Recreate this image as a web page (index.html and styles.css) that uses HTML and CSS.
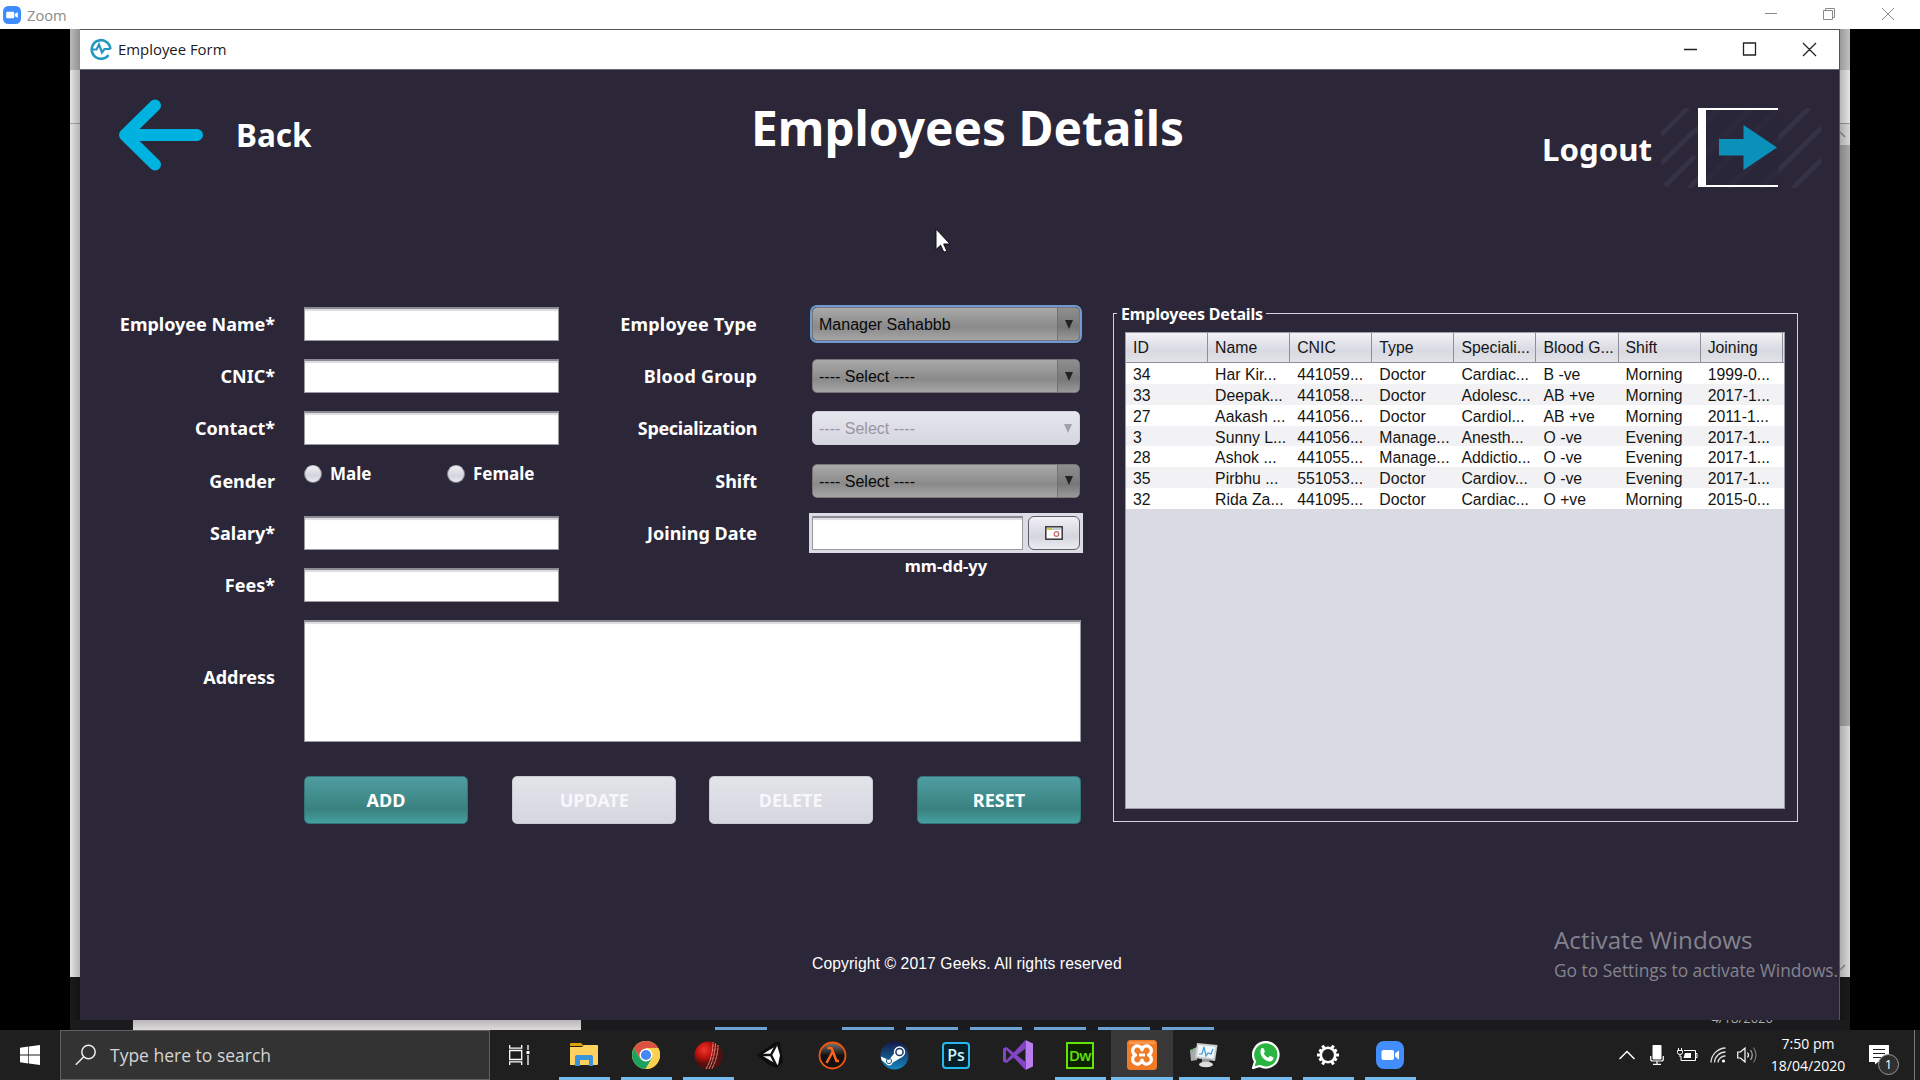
FILE: index.html
```html
<!DOCTYPE html>
<html lang="en">
<head>
<meta charset="utf-8">
<title>Employee Form</title>
<link rel="stylesheet" href="styles.css">
</head>
<body>
<header class="zoom-bar">
  <svg class="zoom-logo" viewBox="0 0 28 28"><rect width="28" height="28" rx="8" fill="#3f8cff"/><rect x="5" y="9" width="12.500" height="10" rx="2" fill="#fff"/><path d="M18.500 12.500 23 9.500v9l-4.500-3z" fill="#fff"/></svg>
  <span class="zoom-name">Zoom</span>
  <svg class="zoom-controls" width="130" height="29" viewBox="0 0 130 29" fill="none" stroke="#8a8a8a"><path d="M0 13.500h12M58.500 10.500h9v9h-9zM60.500 10.500v-2h9v9h-2M117 8l12 12M129 8l-12 12"/></svg>
</header>

<main class="stage">
  <div class="screen">
    <div class="desk-edge edge-left"></div>
    <section class="window">
      <div class="title-bar">
        <svg class="app-logo" viewBox="0 0 22 22" fill="none" stroke="#2596c0" stroke-width="2.600"><path d="M20.300 11A9.300 9.300 0 1 0 18.500 17"/><path d="M1.500 11.500h5l2.500-5 3 8 2.500-3.500h6" stroke-width="2.200"/></svg>
        <span>Employee Form</span>
        <svg class="win-controls" width="134" height="20" viewBox="0 0 134 20" fill="none" stroke="#222" stroke-width="1.300"><path d="M1 10.500h13M60.500 4h12v12h-12zM120 4l13 13M133 4l-13 13"/></svg>
      </div>
      <div class="page">
        <div class="page-head">
          <a class="back">
            <svg width="85" height="72" viewBox="0 0 85 72" fill="none" stroke="#00b2e0" stroke-width="12" stroke-linecap="round" stroke-linejoin="round"><path d="M37 6.500 7 36l30 29.500M7 36h72"/></svg>
            <span>Back</span>
          </a>
          <h1>Employees Details</h1>
          <a class="logout">
            <span>Logout</span>
            <svg width="170" height="80" viewBox="0 0 170 80">
              <g stroke="#343244" stroke-width="5"><path d="M0 27 27 0M0 56 34 22M4 78 34 48M34 24 58 0M28 80 40 68M40 50 90 0M40 78 118 0M68 80 148 0M100 80 160 20M132 80 160 52"/></g>
              <rect x="45" y="1" width="73" height="78" fill="#2b2739" opacity=".75"/>
              <path d="M37 0h80v2H45v75h72v2H37z" fill="#fff"/>
              <path d="M58 31h24.500V17L116 39.500 82.500 62V47.500H58z" fill="#0a90b9"/>
            </svg>
          </a>
        </div>

        <div class="content">
          <form class="form">
            <div class="columns">
              <div class="fields fields-left">
                <label>Employee Name*</label><div class="text-input"></div>
                <label>CNIC*</label><div class="text-input"></div>
                <label>Contact*</label><div class="text-input"></div>
                <label>Gender</label>
                <div class="radios"><span class="radio"><i></i>Male</span><span class="radio"><i></i>Female</span></div>
                <label>Salary*</label><div class="text-input"></div>
                <label>Fees*</label><div class="text-input"></div>
              </div>
              <div class="fields fields-right">
                <label class="loose">Employee Type</label><div class="combo focused"><span>Manager Sahabbb</span><b></b></div>
                <label class="loose">Blood Group</label><div class="combo"><span>---- Select ----</span><b></b></div>
                <label class="tight">Specialization</label><div class="combo disabled"><span>---- Select ----</span><b></b></div>
                <label>Shift</label><div class="combo"><span>---- Select ----</span><b></b></div>
                <label>Joining Date</label>
                <div class="date-box"><div class="date-input"></div><div class="date-button"><svg width="18" height="14" viewBox="0 0 18 14"><rect x=".8" y=".8" width="16.400" height="12.400" fill="#fff" stroke="#39333e" stroke-width="1.500"/><path d="M2 3h5" stroke="#cfc94a" stroke-width="2"/><path d="M7 3h9" stroke="#b9bccb" stroke-width="1.500"/><circle cx="11.500" cy="8" r="2.300" fill="none" stroke="#c26a72" stroke-width="1.300"/></svg></div></div>
                <div class="date-hint">mm-dd-yy</div>
              </div>
            </div>
            <div class="address"><label>Address</label><div class="text-area"></div></div>
            <div class="actions">
              <div class="btn">ADD</div>
              <div class="btn off">UPDATE</div>
              <div class="btn off">DELETE</div>
              <div class="btn">RESET</div>
            </div>
          </form>

          <div class="panel">
            <div class="legend"><span>Employees Details</span></div>
            <div class="table">
              <div class="row head"><span>ID</span><span>Name</span><span>CNIC</span><span>Type</span><span>Speciali...</span><span>Blood G...</span><span>Shift</span><span>Joining</span></div>
              <div class="row"><span>34</span><span>Har Kir...</span><span>441059...</span><span>Doctor</span><span>Cardiac...</span><span>B -ve</span><span>Morning</span><span>1999-0...</span></div>
              <div class="row"><span>33</span><span>Deepak...</span><span>441058...</span><span>Doctor</span><span>Adolesc...</span><span>AB +ve</span><span>Morning</span><span>2017-1...</span></div>
              <div class="row"><span>27</span><span>Aakash ...</span><span>441056...</span><span>Doctor</span><span>Cardiol...</span><span>AB +ve</span><span>Morning</span><span>2011-1...</span></div>
              <div class="row"><span>3</span><span>Sunny L...</span><span>441056...</span><span>Manage...</span><span>Anesth...</span><span>O -ve</span><span>Evening</span><span>2017-1...</span></div>
              <div class="row"><span>28</span><span>Ashok ...</span><span>441055...</span><span>Manage...</span><span>Addictio...</span><span>O -ve</span><span>Evening</span><span>2017-1...</span></div>
              <div class="row"><span>35</span><span>Pirbhu ...</span><span>551053...</span><span>Doctor</span><span>Cardiov...</span><span>O -ve</span><span>Evening</span><span>2017-1...</span></div>
              <div class="row"><span>32</span><span>Rida Za...</span><span>441095...</span><span>Doctor</span><span>Cardiac...</span><span>O +ve</span><span>Morning</span><span>2015-0...</span></div>
            </div>
          </div>
        </div>
        <footer class="copyright">Copyright © 2017 Geeks. All rights reserved</footer>
      </div>
    </section>
    <div class="desk-edge edge-right"><svg class="edge-up" width="10" height="10" viewBox="0 0 10 10" fill="none" stroke="#777" stroke-width="1.500"><path d="M0 2l5 5"/></svg><svg class="edge-down" width="10" height="10" viewBox="0 0 10 10" fill="none" stroke="#777" stroke-width="1.500"><path d="M0 7l5-5"/></svg></div>
    <div class="inner-taskbar"><div class="inner-search"></div><i></i><i class="far"></i><i></i><i class="wide"></i><i></i><i></i><i></i><span>4/18/2020</span></div>
  </div>
  <svg class="cursor" width="18" height="26" viewBox="0 0 18 26"><path d="M1 1v20.500l4.600-4.300 3.200 7 3-1.300-3.100-6.900h6.300z" fill="#fff" stroke="#111" stroke-width="1"/></svg>
  <div class="activate"><p class="activate-title">Activate Windows</p><p class="activate-text">Go to Settings to activate Windows.</p></div>
</main>

<nav class="taskbar">
  <div class="start"><svg width="20" height="20" viewBox="0 0 20 20" fill="#fff"><path d="M0 2.800 8.300 1.600v8H0zM9 1.500 20 0v9.600H9zM0 10.400h8.300v8L0 17.200zM9 10.400h11V20L9 18.500z"/></svg></div>
  <div class="search"><svg width="22" height="22" viewBox="0 0 22 22" fill="none" stroke="#eee" stroke-width="1.500"><circle cx="13.500" cy="8" r="6.700"/><path d="M8.800 12.800.8 20.800"/></svg><span>Type here to search</span></div>
  <div class="app view"><svg width="21" height="20" viewBox="0 0 21 20" fill="none" stroke="#fff" stroke-width="1.300"><path d="M.7 5.500h12v9H.7zM.7 0v3.200h12V0M.7 20v-3.200h12V20M19 0v5M19 10v10"/><path d="M17.500 6h3v3h-3z" fill="#fff" stroke="none"/></svg></div>
  <div class="app on"><svg width="28" height="24" viewBox="0 0 28 24"><path d="M0 1q0-1 1-1h10l3 3H0z" fill="#e0a106"/><path d="M0 4h12l2-2h13q1 0 1 1v18q0 1-1 1H0z" fill="#ffd25e"/><path d="M5 23V14q0-2 2-2h14q2 0 2 2v9h-4v-6h-9v6z" fill="#3a93dd"/></svg></div>
  <div class="app on"><svg width="28" height="28" viewBox="0 0 28 28"><circle cx="14" cy="14" r="14" fill="#fcd04f"/><path d="M14 14 8.200 17.600 1.900 7A14 14 0 0 1 26.100 7H14z" fill="#dd5044"/><path d="M1.900 7A14 14 0 0 0 13.500 28l6.600-10.700H14L8 17.400z" fill="#1ba261"/><path d="M20 17.300 13.500 28A14 14 0 0 0 26.100 7H14z" fill="#fcd04f"/><circle cx="14" cy="14" r="6.500" fill="#fff"/><circle cx="14" cy="14" r="5.100" fill="#4688f1"/></svg></div>
  <div class="app on"><svg width="29" height="29" viewBox="0 0 29 29"><defs><radialGradient id="ball" cx=".35" cy=".3"><stop offset="0" stop-color="#f0362a"/><stop offset=".6" stop-color="#b8110c"/><stop offset="1" stop-color="#54100c"/></radialGradient></defs><circle cx="14.500" cy="14.500" r="14" fill="url(#ball)"/><path d="M12 28Q19 16 19 1M15 28Q21 16 21.500 2M18 27.500Q24 16 24 4" fill="none" stroke="#e3a89f" stroke-width="1" stroke-dasharray="4 .5" opacity=".85"/></svg></div>
  <div class="app"><svg width="30" height="28" viewBox="0 0 30 28"><path d="M2 14 20 1h5l3 20-6 6-8-3z" fill="#0d0d0d"/><path d="M6 14 22 4.500 25 14l-2 10z" fill="#fff"/><path d="M5 14h11M16 14l5-9.500M16 14l5 10" stroke="#111" stroke-width="2.400"/></svg></div>
  <div class="app"><svg width="29" height="29" viewBox="0 0 29 29"><defs><linearGradient id="orb" x2="0" y2="1"><stop offset="0" stop-color="#777"/><stop offset=".5" stop-color="#111"/></linearGradient></defs><circle cx="14.500" cy="14.500" r="13" fill="url(#orb)" stroke="#f2560f" stroke-width="1.800"/><path d="M9.500 7h3q1 0 1.400 1l4.600 12h2.500M14.500 11 8.500 22" fill="none" stroke="#ff6419" stroke-width="2.500"/></svg></div>
  <div class="app"><svg width="29" height="29" viewBox="0 0 29 29"><defs><linearGradient id="steam" x2="0" y2="1"><stop offset="0" stop-color="#14194a"/><stop offset="1" stop-color="#1586bd"/></linearGradient></defs><circle cx="14.500" cy="14.500" r="14" fill="url(#steam)"/><path d="M.8 15.500 9 19l7-9 6 6-9 5.500q-2 4-5.500 2.500L1.500 19z" fill="#fff"/><circle cx="19.500" cy="11" r="5.700" fill="#fff"/><circle cx="19.500" cy="11" r="3.600" fill="none" stroke="#1c335f" stroke-width="1.500"/><circle cx="9" cy="20" r="2.600" fill="none" stroke="#1c5c8e" stroke-width="1"/></svg></div>
  <div class="app"><div class="ps">Ps</div></div>
  <div class="app"><svg width="30" height="30" viewBox="0 0 30 30"><path d="M22.500 0 30 3.500v23L22.500 30z" fill="#b97df0"/><path d="M0 8.500 3.500 7 22.500 22v8L3 9.500v11L22.500 0v8.500L3.500 23 0 21.500z" fill="#8445c7"/></svg></div>
  <div class="app on"><div class="dw">Dw</div></div>
  <div class="app on active"><svg width="30" height="30" viewBox="0 0 30 30"><rect width="30" height="30" rx="3.500" fill="#f07a26"/><path d="M2 1.500h26v2.500H2z" fill="#ffad6e" opacity=".6"/><path d="M15 10A4.700 4.700 0 1 0 8.500 15 4.700 4.700 0 1 0 15 20 4.700 4.700 0 1 0 21.500 15 4.700 4.700 0 1 0 15 10zM12 15h6" fill="none" stroke="#fff" stroke-width="3.200" stroke-linejoin="round"/></svg></div>
  <div class="app on"><svg width="28" height="26" viewBox="0 0 28 26"><path d="M0 8l7-3v13l-6 1z" fill="#a8aba9"/><path d="M1 8h2" stroke="#35b949" stroke-width="2"/><path d="M7 1 27.500 3 25 19 5 16z" fill="#c9ccce"/><path d="M8.500 3 25.500 4.700 23.500 16.500 7 14.300z" fill="#eef5fb"/><path d="M9 12h3l2-7 2 9 2-3 3 1 2-5" fill="none" stroke="#3f98cf" stroke-width="1.200"/><path d="M12 17h8l-1 4H12z" fill="#999"/><ellipse cx="16" cy="22.500" rx="7" ry="2.800" fill="#ddd"/></svg></div>
  <div class="app on"><svg width="28" height="28" viewBox="0 0 28 28"><path d="M1 27 3 20.500A12.700 12.700 0 1 1 7.800 25z" fill="#2ab540" stroke="#fff" stroke-width="2.200" stroke-linejoin="round"/><path d="M9 8q1-1.500 2.500-.8L13 10.500 11.700 12.500q1.500 3 4.500 4.200l1.800-2 3.500 1.700q.3 3-2.700 4-3 .7-6.800-2.500Q7 13.500 9 8z" fill="#fff"/></svg></div>
  <div class="app on"><svg width="24" height="24" viewBox="0 0 24 24" fill="none" stroke="#fff"><circle cx="12" cy="12" r="7.200" stroke-width="2.600"/><path d="M19.500 12h3.500M1 12h3.500M15.800 5.500l1.700-3M8.200 5.500l-1.700-3M15.800 18.500l1.700 3M8.200 18.500l-1.700 3M18.300 8.300l2.500-1.400M18.300 15.700l2.500 1.400M5.700 8.300 3.200 6.900M5.700 15.700l-2.500 1.400" stroke-width="3"/></svg></div>
  <div class="app on"><svg width="28" height="28" viewBox="0 0 28 28"><rect width="28" height="28" rx="8" fill="#438eff"/><rect x="5.500" y="9" width="12.500" height="10" rx="2" fill="#fff"/><path d="M19 12.500 23 9.500v9l-4-3z" fill="#fff"/></svg></div>
  <div class="tray">
    <svg width="16" height="10" viewBox="0 0 16 10" fill="none" stroke="#fff" stroke-width="1.500"><path d="M.5 9 8 1.500 15.500 9"/></svg>
    <svg width="14" height="20" viewBox="0 0 14 20"><rect x="2.500" width="9" height="14.500" rx="1" fill="#fff"/><path d="M.7 11v3q0 2 2 2h8.600q2 0 2-2v-3M7 16v3M3 19.300h8" fill="none" stroke="#fff" stroke-width="1.200"/></svg>
    <svg width="21" height="14" viewBox="0 0 21 14" fill="none" stroke="#fff"><path d="M7 2.500h11.500v10H4V8M18.500 5.500h1.500v4h-1.500M1.500 0v2.500M4.500 0v2.500M.5 2.500h5v2q0 2-2.500 2t-2.500-2zM3 6.500V9"/><path d="M8 5h6v5H6.500z" fill="#fff" stroke="none"/></svg>
    <svg width="16" height="16" viewBox="0 0 16 16" fill="none" stroke="#ddd" stroke-width="1.300"><path d="M1 15.500A15 15 0 0 1 15.500 1M4.500 15.500A11 11 0 0 1 15.500 5M8 15.500A7 7 0 0 1 15.500 9"/><circle cx="13.500" cy="14" r="1.600" fill="#fff" stroke="none"/></svg>
    <svg width="21" height="18" viewBox="0 0 21 18" fill="none" stroke="#fff" stroke-width="1.200"><path d="M.7 6v6h2.800l4.500 4V2L3.500 6zM10.500 6.500q2 2.500 0 5"/><path d="M13.500 4q3.500 5 0 10" stroke="#aaa"/><path d="M16.500 1.500q5 7.500 0 15" stroke="#777"/></svg>
    <div class="clock"><span>7:50 pm</span><span>18/04/2020</span></div>
    <div class="notice"><svg width="21" height="20" viewBox="0 0 21 20"><path d="M0 0h20v17H9l-3 2.500V17H0z" fill="#fff"/><path d="M4 4.500h12M4 8.500h12M4 12.500h8" stroke="#222" stroke-width="1.200"/></svg><span>1</span></div>
  </div>
</nav>
</body>
</html>
```
FILE: styles.css
```css
* { box-sizing: border-box; }
body {
  margin: 0;
  width: 1920px;
  height: 1080px;
  overflow: hidden;
  display: flex;
  flex-direction: column;
  background: #000;
  font-family: "Open Sans", sans-serif;
}
svg { display: block; flex: none; }
h1, p { margin: 0; }

/* Outer title bar */
.zoom-bar { height: 29px; flex: none; background: #fff; display: flex; align-items: center; padding: 0 25px 0 3px; }
.zoom-logo { width: 18px; height: 18px; }
.zoom-name { margin-left: 6px; color: #8c8c8c; font-size: 14.700px; }
.zoom-controls { margin-left: auto; }

/* Shared screen */
.stage { position: relative; height: 1001px; flex: none; display: flex; justify-content: center; }
.screen { width: 1780px; display: grid; grid-template-columns: 10px 1760px 10px; grid-template-rows: 991px 10px; background: #1b1b1d; }
.desk-edge { position: relative; }
.edge-left { background: linear-gradient(to right, transparent, rgba(0, 0, 0, .22)), linear-gradient(#b9b9b9 0 41px, #e6e4e5 41px 94px, #aaa 94px 95px, #e6e4e5 95px 948px, #1b1a19 948px); }
.edge-right { background: linear-gradient(to left, transparent, rgba(0, 0, 0, .2)), linear-gradient(#c0c0c0 0 41px, #e6e4e5 41px 94px, #999 94px 95px, #d9d7d8 95px 116px, #a9a7a8 116px 697px, #dad7d9 697px 948px, #1b1a19 948px); }
.edge-up { position: absolute; left: 0; top: 101px; }
.edge-down { position: absolute; left: 0; top: 934px; }

.window { display: flex; flex-direction: column; background: #2b2739; border: 1px solid #55545c; border-width: 1px 1px 0 0; }
.title-bar { height: 40px; flex: none; background: #fff; border-bottom: 1px solid #6a6872; display: flex; align-items: center; padding: 0 22px 2px 10px; font-size: 14.900px; color: #1b1b1b; }
.app-logo { width: 22px; height: 22px; margin-right: 6px; }
.win-controls { margin-left: auto; }

.page { flex: 1; display: flex; flex-direction: column; color: #fff; font-family: "Noto Sans", sans-serif; font-weight: 700; }
.page-head { height: 237px; flex: none; display: grid; grid-template-columns: 560px 638px 561px; }
.back { display: flex; align-items: flex-start; padding: 29px 0 0 38px; }
.back span { font-size: 31.500px; line-height: 44px; margin: 14px 0 0 33px; }
.page h1 { font-size: 47.800px; line-height: 64px; margin: 26px -10px 0; text-align: center; padding-left: 17px; white-space: nowrap; }
.logout { display: flex; align-items: flex-start; justify-content: flex-end; padding: 38px 8px 0 0; }
.logout span { font-size: 31.200px; line-height: 44px; margin: 19px 9px 0 0; }

.content { display: flex; height: 517px; flex: none; }
.form { width: 1001px; font-size: 18px; }
.columns { display: flex; padding-left: 21px; }
.fields { display: grid; grid-auto-rows: 34px; row-gap: 18.200px; }
.fields label { text-align: right; line-height: 35px; white-space: nowrap; }
.fields .loose { letter-spacing: .2px; }
.fields .tight { letter-spacing: -.35px; }
.fields-left { grid-template-columns: 174px 255px; column-gap: 29px; }
.fields-right { grid-template-columns: 198px 268px; column-gap: 55px; }
.text-input, .text-area, .date-input { background: #fff; border: 1px solid #9b9aa3; border-top: 2px solid #8c8b94; box-shadow: inset 0 2px 1px #dddde1; }
.radios { display: flex; height: 20px; font-size: 17px; }
.radio { display: flex; align-items: center; gap: 8px; width: 143px; flex: none; line-height: 20px; }
.radio i { width: 18px; height: 18px; border-radius: 50%; background: linear-gradient(#efeff3, #d4d4dd 60%, #e8e8ee); border: 1px solid #8b8993; border-top-color: #c5c4cc; }
.combo { display: flex; justify-content: space-between; border: 1px solid #77767a; border-radius: 5px; background: linear-gradient(#a9a9a9, #8a8a8a 60%, #a6a6a6); color: #080808; font: 16px/33px "Liberation Sans", sans-serif; padding-left: 6px; overflow: hidden; }
.combo b { width: 22px; border-left: 1px solid #727272; background: linear-gradient(#8f8f8f, #777 60%, #999); display: flex; align-items: center; justify-content: center; }
.combo b::before { content: ""; border: 4.500px solid transparent; border-top: 9px solid #222; border-bottom: 0; }
.combo.focused { outline: 2px solid #6f9cd0; outline-offset: 0; }
.combo.disabled { background: linear-gradient(#e6e6ee, #d6d6e0); border-color: #d0d0da; color: #9797a0; }
.combo.disabled b { background: none; border: 0; }
.combo.disabled b::before { border-top-color: #9fa0aa; }
.date-box { display: flex; gap: 5px; padding: 3px; margin: -3px -3px; background: #dcdce4; }
.date-input { width: 211px; }
.date-button { width: 52px; border: 1px solid #5d5c68; border-radius: 6px; background: linear-gradient(#f0f0f5, #d5d5df 60%, #ececf2); display: flex; align-items: center; justify-content: center; }
.date-hint { grid-column: 2; text-align: center; font-size: 16.500px; line-height: 24px; margin-top: -14px; }
.address { display: flex; gap: 29px; margin: 18px 0 0 21px; }
.address label { width: 174px; text-align: right; line-height: 115px; }
.text-area { width: 777px; height: 122px; }
.actions { display: flex; width: 777px; margin: 34px 0 0 224px; font-size: 18px; justify-content: space-between; }
.btn { width: 164px; height: 48px; text-align: center; border-radius: 5px; background: linear-gradient(#4f9da1, #39817f 70%, #44a09f); border: 1px solid #347578; line-height: 47px; }
.btn:nth-child(2) { margin-right: -12px; }
.btn.off { background: linear-gradient(#e3e3ea, #d6d6df); border-color: #c9c9d2; color: #f7f7fc; }

.panel { width: 685px; height: 509px; margin: 6px 0 0 32px; border: 1.500px solid #d2d2d8; padding: 0 12px 0 11px; }
.legend { height: 18px; font-size: 16px; line-height: 20px; margin-left: -8px; }
.legend span { position: relative; top: -10px; display: inline-block; background: #2b2739; padding: 0 3px 0 4px; letter-spacing: -.18px; }
.table { height: 477px; background: #dadae3; border: 1px solid #9c9ba5; font: 15.800px/20.800px "Liberation Sans", sans-serif; color: #151515; overflow: hidden; }
.row { display: grid; grid-template-columns: repeat(8, 82.100px); height: 20.860px; background: #fff; white-space: nowrap; }
.row:nth-child(odd) { background: #f2f2f4; }
.row span { padding-left: 7px; line-height: 24px; }
.row.head { height: 30px; background: linear-gradient(#f2f2f6, #d9d9e2 60%, #e2e2e8); border-bottom: 1.500px solid #8f9099; }
.row.head span { line-height: 30px; border-right: 1px solid #8f8f99; }
.copyright { font: 15.700px/20px "Liberation Sans", sans-serif; margin: 130px 0 0 732px; letter-spacing: .1px; }

/* Strip of the shared desktop under the window */
.inner-taskbar { grid-column: 1 / -1; display: flex; align-items: flex-end; padding-left: 63px; gap: 12px; overflow: hidden; }
.inner-search { width: 448px; height: 10px; background: linear-gradient(#b8b6b7, #dcdadb); margin-right: 122px; }
.inner-taskbar i { width: 52px; height: 3px; background: #6ba4d4; }
.inner-taskbar .far { margin-left: 63px; }
.inner-taskbar span { margin: -9px 77px 0 auto; font-size: 13px; line-height: 14px; color: #aaa; align-self: flex-start; }

.cursor { position: absolute; left: 935px; top: 199px; }
.activate { position: absolute; left: 1554px; top: 893px; color: #85838d; white-space: nowrap; }
.activate-title { font-size: 24.200px; line-height: 36px; }
.activate-text { font-size: 17.350px; line-height: 24px; }

/* Taskbar */
.taskbar { height: 50px; flex: none; background: #1f1f1f; display: flex; color: #fff; }
.start { width: 60px; display: flex; align-items: center; justify-content: center; }
.search { width: 430px; height: 50px; border: 1px solid #606060; background: #333; display: flex; align-items: center; gap: 13px; padding-left: 14px; color: #d5d5d5; font-size: 17.500px; }
.app { width: 62px; display: flex; align-items: center; justify-content: center; }
.view { width: 63px; padding-right: 4px; }
.app.on { background: linear-gradient(#76b9ed, #76b9ed) center bottom / 51px 3px no-repeat; }
.app.active { background: linear-gradient(#76b9ed, #76b9ed) center bottom / 62px 3px no-repeat, #393939; }
.ps, .dw { width: 28px; height: 27px; border: 2px solid #25b9ee; border-radius: 4px; background: #06202a; font: 600 16px/22px "Open Sans", sans-serif; text-align: center; color: #cdf0fb; }
.dw { border-color: #62e30a; border-radius: 0; background: #0d2200; color: #62e30a; font-size: 15px; letter-spacing: -.5px; }
.tray { margin-left: auto; width: 301px; flex: none; display: flex; align-items: center; }
.tray > svg:nth-child(2) { margin-left: 15px; }
.tray > svg:nth-child(3) { margin-left: 13px; }
.tray > svg:nth-child(4) { margin-left: 12px; }
.tray > svg:nth-child(5) { margin-left: 11px; }
.clock { width: 80px; margin-left: 10px; display: flex; flex-direction: column; text-align: center; font-size: 14px; line-height: 22px; white-space: nowrap; }
.notice { position: relative; margin-left: 21px; width: 46px; height: 50px; padding-top: 15px; border-right: 1px solid #777; }
.notice span { position: absolute; left: 9px; top: 24px; width: 21px; height: 21px; border: 1px solid #999; border-radius: 50%; background: #303030; text-align: center; font-size: 13px; line-height: 19px; }
```
